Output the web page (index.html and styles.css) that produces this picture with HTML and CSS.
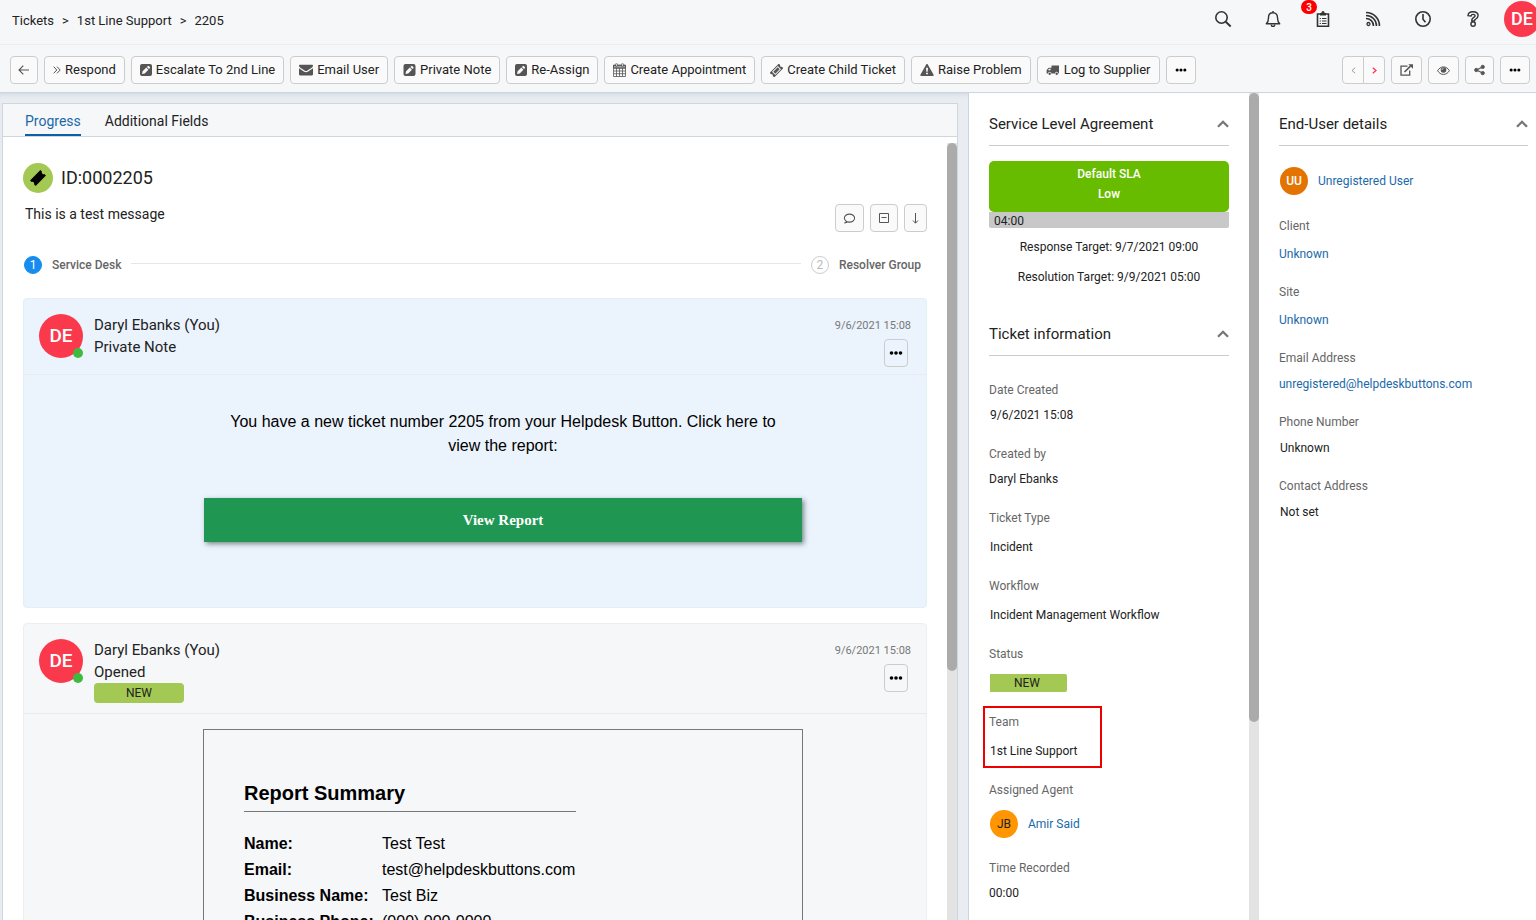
FILE: index.html
```html
<!DOCTYPE html>
<html lang="en">
<head>
<meta charset="utf-8">
<title>Ticket 2205</title>
<link rel="stylesheet" href="styles.css">
</head>
<body>
<svg class="defs" aria-hidden="true">
  <symbol id="i-edit" viewBox="0 0 12 12"><path fill="currentColor" fill-rule="evenodd" d="M2 0h8a2 2 0 0 1 2 2v8a2 2 0 0 1-2 2H2a2 2 0 0 1-2-2V2a2 2 0 0 1 2-2zM2 10l2.700-.6 3.700-3.700-2.100-2.100-3.700 3.700zM6.900 3l2.100 2.100.8-.8a.9.9 0 0 0 0-1.300l-.8-.8a.9.9 0 0 0-1.300 0z"/></symbol>
  <symbol id="i-ticket" viewBox="0 0 16 16"><g transform="rotate(-45 8 8)"><path fill="currentColor" fill-rule="evenodd" d="M0 4h16v2.500a1.600 1.600 0 0 0 0 3V12H0V9.500a1.600 1.600 0 0 0 0-3zM3 5.200v5.600h10V5.200z"/><path fill="currentColor" d="M4.200 6.300h7.600v3.400H4.200z"/></g></symbol>
  <symbol id="i-dots" viewBox="0 0 14 4"><g fill="#000"><circle cx="2.500" cy="2" r="1.800"/><circle cx="7" cy="2" r="1.800"/><circle cx="11.500" cy="2" r="1.800"/></g></symbol>
  <symbol id="i-up" viewBox="0 0 12 8"><path d="M1 6.800l5-5 5 5" fill="none" stroke="#777" stroke-width="2.300"/></symbol>
</svg>

<header class="topbar">
  <nav class="crumbs" aria-label="Breadcrumb"><a href="#">Tickets</a><span>&gt;</span><a href="#">1st Line Support</a><span>&gt;</span><a href="#">2205</a></nav>
  <div class="top-actions">
    <button class="top-btn" aria-label="Search"><svg width="18" height="18" viewBox="0 0 18 18" fill="none" stroke="currentColor" stroke-width="1.600"><circle cx="7.500" cy="7.500" r="5.700"/><path d="M11.700 11.700l5 4.800" stroke-width="1.900"/></svg></button>
    <button class="top-btn" aria-label="Notifications"><svg width="18" height="18" viewBox="0 0 18 18" fill="none" stroke="currentColor" stroke-width="1.400"><path d="M9 1v1.700M2.300 13.700c1.700-1.500 2.200-3 2.200-6C4.500 4.500 6.500 2.700 9 2.700s4.500 1.800 4.500 5c0 3 .5 4.500 2.200 6z" stroke-linejoin="round"/><path d="M7.300 14.500c0 2.500 3.400 2.500 3.400 0"/></svg></button>
    <button class="top-btn" aria-label="Tasks"><svg width="18" height="18" viewBox="0 0 18 18" fill="none" stroke="currentColor" stroke-width="1.600"><path d="M3.500 4h11v12.300h-11z"/><path d="M6 3h6v2.500H6z" fill="currentColor" stroke="none"/><circle cx="9" cy="2.500" r="1.500" fill="currentColor" stroke="none"/><path d="M5.700 8.500h1.200M8 8.500h4.500M5.700 11h1.200M8 11h4.500M5.700 13.500h1.200M8 13.500h4.500" stroke-width="1"/></svg><span class="count">3</span></button>
    <button class="top-btn" aria-label="Feed"><svg width="18" height="18" viewBox="0 0 18 18" fill="none" stroke="currentColor" stroke-width="1.600"><circle cx="4.500" cy="14" r="1.500" stroke-width="1.300"/><path d="M2 8.500c4.200 0 7.500 3.300 7.500 7.500M2 5.500c5.900 0 10.500 4.600 10.500 10.500M2 2.500c7.500 0 13.500 6 13.500 13.500"/></svg></button>
    <button class="top-btn" aria-label="Recent"><svg width="18" height="18" viewBox="0 0 18 18" fill="none" stroke="currentColor" stroke-width="1.600"><circle cx="9" cy="9" r="7.200"/><path d="M9 4v5.200l2.500 3"/></svg></button>
    <button class="top-btn" aria-label="Help"><svg width="18" height="18" viewBox="0 0 18 18" fill="none" stroke="currentColor" stroke-width="1.400"><path d="M4 5.700C4 3 6 1.700 9 1.700s5.100 1.600 5.100 3.900-1.500 3.200-2.800 3.900c-.6.300-.8.700-.8 1.400H7.700c-.1-2 .7-2.800 2-3.600.9-.5 1.400-.9 1.400-1.600 0-.9-.8-1.300-2-1.300S7.300 4.800 7 6z"/><circle cx="9.100" cy="14" r="2.200"/></svg></button>
    <button class="avatar avatar-user" aria-label="Account">DE</button>
  </div>
</header>

<div class="toolbar">
  <div class="group">
    <button class="btn btn-back" aria-label="Back"><svg width="12" height="10" viewBox="0 0 12 10" fill="none" stroke="currentColor" stroke-width="1.100"><path d="M11 5H1M5.300.6L1 5l4.300 4.400"/></svg></button>
    <button class="btn"><svg width="8" height="8" viewBox="0 0 8 8" fill="none" stroke="currentColor"><path d="M.7.700L3.800 4 .7 7.300M4 .7L7.200 4 4 7.300"/></svg>Respond</button>
    <button class="btn"><svg width="12" height="12"><use href="#i-edit"/></svg>Escalate To 2nd Line</button>
    <button class="btn"><svg width="14" height="12" viewBox="0 0 14 12" fill="currentColor"><path d="M1.200.8h11.600c.8 0 1.200.5 1.200 1 0 .7-.6 1.400-1.300 1.900L8.400 6.500c-.9.7-1.900.7-2.800 0L1.300 3.700C.6 3.200 0 2.600 0 1.800c0-.6.4-1 1.200-1zM0 4.200l4.800 3.300c1.500 1.100 2.900 1.100 4.400 0L14 4.200v6.100c0 .7-.5 1.200-1.200 1.200H1.200c-.7 0-1.200-.5-1.200-1.200z"/></svg>Email User</button>
    <button class="btn"><svg width="13" height="12"><use href="#i-edit"/></svg>Private Note</button>
    <button class="btn"><svg width="12" height="12"><use href="#i-edit"/></svg>Re-Assign</button>
    <button class="btn"><svg width="13" height="14" viewBox="0 0 13 14" fill="none" stroke="currentColor" stroke-width=".8"><path d="M.5 2.500h12v11H.5zM.5 5.200h12M.5 8h12M.5 10.700h12M3.500 5v8.500M6.500 5v8.500M9.500 5v8.500"/><path d="M.5 2h12v3H.5z" fill="currentColor" fill-opacity=".5"/><path d="M3.500.5v3M9.500.5v3" stroke-width="2"/><path d="M3.500 1v2M9.500 1v2" stroke="#fff" stroke-width=".7"/></svg>Create Appointment</button>
    <button class="btn"><svg width="13" height="13"><use href="#i-ticket"/></svg>Create Child Ticket</button>
    <button class="btn"><svg width="14" height="12" viewBox="0 0 14 12" fill="currentColor"><path fill-rule="evenodd" d="M6.200.5c.3-.6 1.300-.6 1.600 0l5.800 10.300c.3.500 0 1.200-.8 1.200H1.200c-.8 0-1.100-.7-.8-1.200zM6 3.700l.3 4h1.400l.3-4zM6.100 8.700v1.600h1.800V8.700z"/></svg>Raise Problem</button>
    <button class="btn"><svg width="14" height="12" viewBox="0 0 14 12" fill="currentColor"><path fill-rule="evenodd" d="M5.500 1.500H13v8h-.6a1.700 1.700 0 0 0-3.400 0H5.400a1.700 1.700 0 0 0-3.400 0H.6V6.500c0-.4.200-.7.400-.9l1.500-1.500c.3-.3.500-.4.900-.4h2.100zM1.600 6.300h3V4.700H3.300z"/><circle cx="3.700" cy="9.800" r="1.200"/><circle cx="10.700" cy="9.800" r="1.200"/></svg>Log to Supplier</button>
    <button class="btn" aria-label="More actions"><svg width="12" height="4"><use href="#i-dots"/></svg></button>
  </div>
  <div class="group">
    <div class="pager">
      <button class="btn" aria-label="Previous"><svg width="5" height="7" viewBox="0 0 5 7" fill="none" stroke="#999"><path d="M4.200.7L1 3.500l3.200 2.800"/></svg></button>
      <button class="btn" aria-label="Next"><svg width="5" height="7" viewBox="0 0 5 7" fill="none" stroke="#fa3950" stroke-width="1.300"><path d="M.8.700L4 3.500.8 6.300"/></svg></button>
    </div>
    <button class="btn" aria-label="Open"><svg width="13" height="12" viewBox="0 0 13 12" fill="none" stroke="currentColor" stroke-width="1.300"><path d="M7.500 2.200H1v9h8.700V6.500"/><path d="M4.500 8L10.500 2.200" stroke-width="1.600"/><path d="M8.300.3H13v4.500z" fill="currentColor" stroke="none"/></svg></button>
    <button class="btn" aria-label="Watch"><svg width="13" height="9" viewBox="0 0 13 9" fill="none" stroke="currentColor"><path d="M.6 4.700C2 2.300 4 .9 6.500.9s4.500 1.400 5.900 3.800C11 7 9 8.400 6.500 8.400S2 7 .6 4.700z"/><circle cx="6.500" cy="4" r="2.800" fill="currentColor" stroke="none"/><path d="M5 4c0-1 .6-1.600 1.500-1.600" stroke="#fff" stroke-width=".7"/></svg></button>
    <button class="btn" aria-label="Share"><svg width="11" height="12" viewBox="0 0 12 12" fill="currentColor" stroke="currentColor"><path d="M9.500 2.700L2.700 6l6.800 3.300" fill="none" stroke-width="1.400"/><circle cx="9.500" cy="2.600" r="1.800"/><circle cx="2.500" cy="6" r="1.800"/><circle cx="9.500" cy="9.400" r="1.800"/></svg></button>
    <button class="btn" aria-label="More"><svg width="12" height="4"><use href="#i-dots"/></svg></button>
  </div>
</div>

<div class="layout">
  <main class="panel">
    <nav class="tabs"><a class="tab active" href="#">Progress</a><a class="tab" href="#">Additional Fields</a></nav>
    <div class="scroll-row">
      <div class="stream">
        <div class="ticket-head"><span class="ticket-mark"><svg width="18" height="18" viewBox="0 0 16 16"><path transform="rotate(-45 8 8)" d="M1.500 4.500h13v2a1.600 1.600 0 0 0 0 3v2h-13v-2a1.600 1.600 0 0 0 0-3z"/></svg></span><h1>ID:0002205</h1></div>
        <div class="summary">
          <p>This is a test message</p>
          <div class="group">
            <button class="btn btn-tool" aria-label="Comments"><svg width="13" height="11" viewBox="0 0 13 11" fill="none" stroke="currentColor" stroke-width="1.100"><path d="M3.600 8.600C2.200 7.900 1.400 6.500 1.400 5.100c0-2.300 2.300-4 5-4s5.200 1.700 5.200 4-2.300 4-5.200 4c-.5 0-1-.1-1.500-.2-.9.700-1.900 1-3.500 1 .9-.3 1.600-.8 2.200-1.300z"/></svg></button>
            <button class="btn btn-tool" aria-label="Collapse"><svg width="12" height="12" viewBox="0 0 12 12" fill="none" stroke="currentColor"><path d="M1.500 1.500h9v9h-9zM3.500 5.500h5"/></svg></button>
            <button class="btn btn-slim" aria-label="Sort"><svg width="7" height="11" viewBox="0 0 7 11" fill="none" stroke="currentColor"><path d="M3.500 0v10M1 7.500l2.500 2.700L6 7.500"/></svg></button>
          </div>
        </div>
        <div class="steps"><span class="step-no current">1</span><b>Service Desk</b><span class="step-line"></span><span class="step-no">2</span><b>Resolver Group</b></div>

        <article class="card note">
          <header class="card-head">
            <span class="avatar avatar-lg">DE<i class="online"></i></span>
            <div class="who"><p>Daryl Ebanks (You)</p><p>Private Note</p></div>
            <div class="meta"><time>9/6/2021 15:08</time><button class="btn btn-more" aria-label="Note actions"><svg width="14" height="4"><use href="#i-dots"/></svg></button></div>
          </header>
          <div class="card-body mail">
            <p>You have a new ticket number 2205 from your Helpdesk Button. Click here to view the report:</p>
            <a class="report-link" href="#">View Report</a>
          </div>
        </article>

        <article class="card">
          <header class="card-head">
            <span class="avatar avatar-lg">DE<i class="online"></i></span>
            <div class="who"><p>Daryl Ebanks (You)</p><p>Opened</p><span class="badge">NEW</span></div>
            <div class="meta"><time>9/6/2021 15:08</time><button class="btn btn-more" aria-label="Entry actions"><svg width="14" height="4"><use href="#i-dots"/></svg></button></div>
          </header>
          <div class="card-body">
            <section class="report">
              <h2>Report Summary</h2>
              <table>
                <tr><th scope="row">Name:</th><td>Test Test</td></tr>
                <tr><th scope="row">Email:</th><td>test@helpdeskbuttons.com</td></tr>
                <tr><th scope="row">Business Name:</th><td>Test Biz</td></tr>
                <tr><th scope="row">Business Phone:</th><td>(000) 000-0000</td></tr>
              </table>
            </section>
          </div>
        </article>
      </div>
      <div class="track"><div class="thumb thumb-main"></div></div>
    </div>
  </main>

  <aside class="column ticket-info">
    <div class="column-body">
      <section class="sla">
        <h2 class="section-head">Service Level Agreement<button aria-label="Collapse"><svg width="12" height="8"><use href="#i-up"/></svg></button></h2>
        <div class="sla-level">Default SLA<br>Low</div>
        <div class="sla-time">04:00</div>
        <div class="targets">
          <p>Response Target: 9/7/2021 09:00</p>
          <p>Resolution Target: 9/9/2021 05:00</p>
        </div>
      </section>
      <section>
        <h2 class="section-head">Ticket information<button aria-label="Collapse"><svg width="12" height="8"><use href="#i-up"/></svg></button></h2>
        <dl class="fields">
          <div class="field compact inset"><dt>Date Created</dt><dd>9/6/2021 15:08</dd></div>
          <div class="field compact"><dt>Created by</dt><dd>Daryl Ebanks</dd></div>
          <div class="field inset"><dt>Ticket Type</dt><dd>Incident</dd></div>
          <div class="field inset"><dt>Workflow</dt><dd>Incident Management Workflow</dd></div>
          <div class="field"><dt>Status</dt><dd class="status-row"><span class="status">NEW</span></dd></div>
          <div class="field inset marked"><dt>Team</dt><dd>1st Line Support</dd></div>
          <div class="field"><dt>Assigned Agent</dt><dd class="person"><span class="avatar avatar-sm agent">JB</span><a href="#">Amir Said</a></dd></div>
          <div class="field compact"><dt>Time Recorded</dt><dd>00:00</dd></div>
        </dl>
      </section>
    </div>
    <div class="track"><div class="thumb thumb-side"></div></div>
  </aside>

  <aside class="column user-info">
    <div class="column-body">
      <h2 class="section-head">End-User details<button aria-label="Collapse"><svg width="12" height="8"><use href="#i-up"/></svg></button></h2>
      <div class="person"><span class="avatar avatar-sm enduser">UU</span><a href="#">Unregistered User</a></div>
      <dl class="fields">
        <div class="field"><dt>Client</dt><dd><a href="#">Unknown</a></dd></div>
        <div class="field"><dt>Site</dt><dd><a href="#">Unknown</a></dd></div>
        <div class="field compact"><dt>Email Address</dt><dd><a href="#">unregistered@helpdeskbuttons.com</a></dd></div>
        <div class="field compact inset"><dt>Phone Number</dt><dd>Unknown</dd></div>
        <div class="field compact inset"><dt>Contact Address</dt><dd>Not set</dd></div>
      </dl>
    </div>
  </aside>
</div>
</body>
</html>
```
FILE: styles.css
```css
*, *::after { box-sizing: border-box; }
body {
  margin: 0;
  height: 100vh;
  display: flex;
  flex-direction: column;
  overflow: hidden;
  background: #e9edf2;
  color: #222;
  font: 12px/20px Roboto, sans-serif;
}
h1, h2, p, dl, dd { margin: 0; font-weight: 400; }
a { color: #1a69a9; text-decoration: none; }
button { font: inherit; color: inherit; cursor: pointer; }
svg { display: block; flex: none; }
.defs { position: absolute; width: 0; height: 0; }

/* Top bar */
.topbar {
  display: flex;
  justify-content: space-between;
  padding: 1px 0 7px 12px;
  flex: none;
  overflow: hidden;
  background: #f6f7f9;
}
.crumbs { display: flex; align-items: center; gap: 8px; padding-top: 4px; font-size: 13px; }
.crumbs a { color: #222; }
.top-actions { display: flex; align-items: center; margin-right: -4px; }
.top-btn {
  position: relative;
  width: 50px;
  height: 36px;
  padding: 0;
  border: 0;
  background: none;
  color: #333;
  display: grid;
  place-items: center;
}
.count {
  position: absolute;
  top: -1px;
  left: 3px;
  width: 16px;
  height: 14px;
  border-radius: 7px;
  background: #f00;
  color: #fff;
  font-size: 10px;
  font-weight: 500;
  line-height: 15px;
}
.avatar {
  position: relative;
  display: grid;
  place-items: center;
  flex: none;
  padding: 0;
  border: 0;
  border-radius: 50%;
  background: #fa394d;
  color: #fff;
}
.avatar-user { width: 36px; height: 36px; margin-left: 6px; font-size: 18px; font-weight: 500; }
.avatar-lg { width: 44px; height: 44px; font-size: 19px; font-weight: 500; }
.avatar-sm { width: 28px; height: 28px; font-size: 12px; }
.agent { background: #ff9500; color: #222; }
.enduser { background: #e37400; font-weight: 500; }
.online {
  position: absolute;
  right: 0;
  bottom: 0;
  width: 10px;
  height: 10px;
  border-radius: 50%;
  background: #3dbb3d;
}

/* Toolbar */
.toolbar {
  position: relative;
  display: flex;
  justify-content: space-between;
  flex: none;
  padding: 11px 6px 8px 10px;
  border-top: 1px solid #ebedf0;
  border-bottom: 1px solid #cbd5e0;
  background: #f6f7f9;
}
.group { display: flex; gap: 6px; }
.btn {
  display: flex;
  align-items: center;
  justify-content: center;
  gap: 4px;
  height: 28px;
  padding: 0 8px;
  border: 1px solid #ccc;
  border-radius: 4px;
  background: #fafafa;
  font-size: 13px;
  white-space: nowrap;
}
.btn svg { color: #555; }
.btn-back { padding: 0 7px; }
.pager { display: flex; }
.pager .btn { width: 22px; }
.pager .btn:first-child { border-radius: 4px 0 0 4px; }
.pager .btn:last-child { margin-left: -1px; border-radius: 0 4px 4px 0; }

/* Page columns */
.layout {
  flex: 1;
  min-height: 0;
  display: grid;
  grid-template-columns: minmax(0, 1fr) 291px 277px;
  box-shadow: inset 0 5px 5px -3px #d3dae1;
}
.panel {
  display: flex;
  flex-direction: column;
  min-height: 0;
  margin: 10px 10px 0 2px;
  border: 1px solid #cdd7e0;
  border-bottom: 0;
  background: #fff;
}
.tabs {
  display: flex;
  gap: 24px;
  flex: none;
  padding-left: 22px;
  border-bottom: 1px solid #cdd7e0;
  background: #f6f7f9;
}
.tab {
  height: 32px;
  padding-top: 7px;
  border-bottom: 2px solid transparent;
  color: #222;
  font-size: 14px;
}
.tab.active { border-color: #0e5fa3; color: #1a69a9; }
.scroll-row { display: flex; flex: 1; min-height: 0; }
.stream { flex: 1; min-width: 0; overflow: hidden; padding: 26px 20px 0; }
.track { width: 10px; flex: none; background: #e3e3e3; }
.scroll-row .track { margin-top: 6px; }
.thumb { border-radius: 5px; background: #ababab; }
.thumb-main { height: 68%; }
.thumb-side { height: 76%; }

/* Ticket heading */
.ticket-head { display: flex; align-items: center; gap: 8px; }
.ticket-head h1 { font-size: 18px; line-height: 30px; }
.ticket-mark {
  display: grid;
  place-items: center;
  width: 30px;
  height: 30px;
  border-radius: 50%;
  background: #a3c853;
}
.summary {
  display: flex;
  justify-content: space-between;
  margin-top: 11px;
  padding-left: 2px;
  font-size: 14px;
}
.btn-tool { padding: 0 7px; }
.btn-slim { width: 23px; padding: 0; }
.steps {
  display: flex;
  align-items: center;
  gap: 10px;
  margin: 24px 0;
  padding: 0 6px 0 1px;
  color: #666;
  line-height: 18px;
}
.step-no {
  width: 18px;
  height: 18px;
  border: 1px solid #ccc;
  border-radius: 50%;
  color: #bbb;
  line-height: 16px;
  text-align: center;
}
.step-no.current { border-color: #158cee; background: #158cee; color: #fff; }
.steps b { font-weight: 500; }
.step-line { flex: 1; height: 1px; margin-bottom: 3px; background: #e6e6e6; }

/* Timeline cards */
.card {
  margin-bottom: 15px;
  border: 1px solid #eceef0;
  border-radius: 4px;
  background: #f6f7f9;
}
.note { border-color: #e4eef7; background: #ebf3fc; }
.card-head {
  display: flex;
  align-items: flex-start;
  gap: 11px;
  padding: 15px 15px 7px;
  border-bottom: 1px solid #e9ecef;
}
.who { flex: 1; font-size: 15px; line-height: 22px; }
.badge {
  display: block;
  width: 90px;
  margin-bottom: 3px;
  border-radius: 4px;
  background: #a3c853;
  font-size: 12px;
  line-height: 20px;
  text-align: center;
}
.meta {
  display: flex;
  flex-direction: column;
  align-items: flex-end;
  gap: 1px;
  color: #777;
  font-size: 11px;
  line-height: 24px;
}
.btn-more { width: 24px; padding: 0; margin-right: 3px; background: none; }
.card-body {
  padding: 15px 0 15px 56px;
  color: #000;
  font: 16px/24px "Liberation Sans", Arial, sans-serif;
}
.mail { padding: 35px 0 65px 56px; text-align: center; }
.mail p { max-width: 598px; margin: 0 auto 40px; padding: 0 24px; }
.report-link {
  display: block;
  max-width: 598px;
  margin: 0 auto;
  background: #209653;
  box-shadow: 2px 2px 5px #77878a;
  color: #fff;
  font: bold 15px/44px "Liberation Serif", "Times New Roman", serif;
}
.report {
  max-width: 600px;
  margin: 0 auto;
  padding: 48px 40px;
  border: 1px solid #777;
}
.report h2 {
  max-width: 332px;
  padding-bottom: 3px;
  margin-bottom: 19px;
  border-bottom: 1px solid #777;
  font-size: 20px;
  font-weight: 700;
  line-height: 30px;
}
.report table { border-collapse: collapse; }
.report th, .report td { padding: 0; text-align: left; line-height: 26px; white-space: nowrap; }
.report th { width: 138px; }

/* Side columns */
.column { display: flex; min-height: 0; overflow: hidden; background: #fff; }
.ticket-info { border-left: 1px solid #c9d5df; }
.column-body { flex: 1; min-width: 0; padding: 0 20px; }
.user-info .column-body { padding-right: 8px; }
.section-head {
  display: flex;
  justify-content: space-between;
  align-items: center;
  padding: 16px 0 6px;
  border-bottom: 1px solid #ccc;
  font-size: 15px;
  line-height: 30px;
}
.section-head button { padding: 0; border: 0; background: none; }
.sla { margin-bottom: 16px; text-align: center; }
.targets { display: grid; gap: 10px; padding-top: 9px; }
.sla-level {
  margin-top: 15px;
  padding: 3px 0 8px;
  border-radius: 5px;
  background: #67bc00;
  color: #fff;
  font-weight: 500;
}
.sla-time {
  padding: 2px 5px 0;
  border-radius: 0 0 2px 2px;
  background: #c8c8c8;
  line-height: 14px;
  text-align: left;
}
.fields { padding-top: 24px; }
.field { position: relative; margin-bottom: 19px; }
.field dt { color: #666; }
.field dd { margin-top: 9px; }
.field.compact dd { margin-top: 5px; }
.inset dd { padding-left: 1px; }
.status {
  display: block;
  width: 77px;
  padding-right: 3px;
  border-radius: 0 2px 2px 0;
  background: #a3c853;
  line-height: 18px;
  text-align: center;
}
.status-row { padding: 1px; }
.marked::after {
  content: "";
  position: absolute;
  top: -6px;
  left: -6px;
  bottom: -7px;
  width: 119px;
  border: 2px solid #e00;
}
.person { display: flex; align-items: center; gap: 10px; height: 30px; padding-left: 1px; }
.user-info .person { margin-top: 20px; }
.user-info .fields { padding-top: 20px; }
.user-info .field { margin-bottom: 18px; }
.user-info .field dd { margin-top: 8px; }
.user-info .compact dd { margin-top: 6px; }
```
